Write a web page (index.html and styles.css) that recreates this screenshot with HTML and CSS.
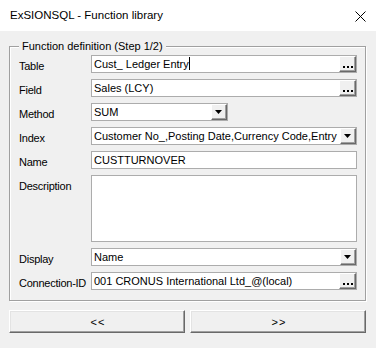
FILE: index.html
```html
<!DOCTYPE html>
<html lang="en">
<head>
  <meta charset="UTF-8">
  <title>ExSIONSQL - Function library</title>
  <link rel="stylesheet" href="styles.css">
</head>
<body>
  <div class="window">
    <div class="titlebar">
      <span class="title">ExSIONSQL - Function library</span>
      <svg class="close" width="11" height="11" viewBox="0 0 11 11">
        <path d="M0.5 0.5 L10.5 10.5 M10.5 0.5 L0.5 10.5" stroke="#000" stroke-width="1"/>
      </svg>
    </div>

    <div class="client">
      <fieldset class="group">
        <legend>Function definition (Step 1/2)</legend>
        <div class="form">
          <label>Table</label>
          <div class="field">
            <span class="value">Cust_ Ledger Entry<span class="caret"></span></span>
            <span class="btn"><svg width="10" height="2" viewBox="0 0 10 2"><rect x="0" width="2" height="2"/><rect x="4" width="2" height="2"/><rect x="8" width="2" height="2"/></svg></span>
          </div>

          <label>Field</label>
          <div class="field">
            <span class="value">Sales (LCY)</span>
            <span class="btn"><svg width="10" height="2" viewBox="0 0 10 2"><rect x="0" width="2" height="2"/><rect x="4" width="2" height="2"/><rect x="8" width="2" height="2"/></svg></span>
          </div>

          <label>Method</label>
          <div class="field combo short">
            <span class="value">SUM</span>
            <span class="btn drop"><svg width="7" height="4" viewBox="0 0 7 4"><polygon points="0,0 7,0 3.5,4"/></svg></span>
          </div>

          <label>Index</label>
          <div class="field combo">
            <span class="value">Customer No_,Posting Date,Currency Code,Entry No_</span>
            <span class="btn drop"><svg width="7" height="4" viewBox="0 0 7 4"><polygon points="0,0 7,0 3.5,4"/></svg></span>
          </div>

          <label>Name</label>
          <div class="field">
            <span class="value">CUSTTURNOVER</span>
          </div>

          <label>Description</label>
          <div class="field tall"></div>

          <label>Display</label>
          <div class="field combo">
            <span class="value">Name</span>
            <span class="btn drop"><svg width="7" height="4" viewBox="0 0 7 4"><polygon points="0,0 7,0 3.5,4"/></svg></span>
          </div>

          <label>Connection-ID</label>
          <div class="field">
            <span class="value">001 CRONUS International Ltd_@(local)</span>
            <span class="btn"><svg width="10" height="2" viewBox="0 0 10 2"><rect x="0" width="2" height="2"/><rect x="4" width="2" height="2"/><rect x="8" width="2" height="2"/></svg></span>
          </div>
        </div>
      </fieldset>

      <div class="nav">
        <button class="push">&lt; &lt;</button>
        <button class="push">&gt; &gt;</button>
      </div>
    </div>
  </div>
</body>
</html>
```

FILE: styles.css
```css
body {
  margin: 0;
  background: #f0f0f0;
  font-family: 'Liberation Sans', Arial, sans-serif;
  color: #000;
}

.window {
  width: 376px;
  height: 348px;
  box-sizing: border-box;
  background: #f0f0f0;
  overflow: hidden;
}

/* Title bar */
.titlebar {
  height: 31px;
  background: #fff;
  display: flex;
  align-items: center;
  justify-content: space-between;
  padding: 0 10px 0 10px;
}
.title {
  font-size: 11.5px;
  padding-bottom: 1px;
}
.close {
  display: block;
  margin-top: 1px;
}

.client {
  padding: 7px 10px 0 9px;
}

/* Group box */
.group {
  margin: 0;
  padding: 1px 8px 10px 9px;
  border: 1px solid #a0a0a0;
  box-shadow: inset 1px 1px 0 #fff, 1px 1px 0 #fff;
  min-width: 0;
}
.group legend {
  padding: 0 3px;
  font-size: 11px;
  line-height: 16px;
  background: #f0f0f0;
}

.form {
  display: grid;
  grid-template-columns: 72px 1fr;
  row-gap: 6px;
  align-items: start;
}
.form label {
  font-size: 11px;
  letter-spacing: -0.25px;
  line-height: 15px;
  height: 18px;
  box-sizing: border-box;
  padding-top: 4px;
  white-space: nowrap;
}

.field {
  height: 18px;
  box-sizing: border-box;
  border: 1px solid #acacac;
  background: #fff;
  display: flex;
  align-items: stretch;
  min-width: 0;
}
.field.short {
  width: 137px;
}
.field.tall {
  height: 67px;
}
.value {
  flex: 1;
  min-width: 0;
  padding-left: 2px;
  font-size: 11px;
  line-height: 16px;
  white-space: nowrap;
  overflow: hidden;
}
.caret {
  display: inline-block;
  width: 1px;
  height: 13px;
  background: #000;
  vertical-align: -2px;
  margin-left: 0;
}

/* Small 3D buttons inside fields */
.btn {
  width: 17px;
  box-sizing: border-box;
  background: #f0f0f0;
  border: 1px solid;
  border-color: #fff #696969 #696969 #fff;
  box-shadow: inset -1px -1px 0 #a0a0a0;
  display: flex;
  align-items: flex-end;
  justify-content: center;
  padding-bottom: 3px;
}
.btn svg {
  display: block;
  fill: #000;
}
.btn.drop {
  width: 16px;
  align-items: center;
  padding: 0 1px 0 0;
}

/* Bottom navigation buttons */
.nav {
  display: grid;
  grid-template-columns: 1fr 1fr;
  column-gap: 5px;
  margin-top: 9px;
}
.push {
  height: 23px;
  margin: 0;
  padding: 0;
  font-family: 'Liberation Sans', Arial, sans-serif;
  font-size: 11px;
  letter-spacing: -1px;
  color: #000;
  background: #f0f0f0;
  border: 1px solid;
  border-color: #fff #696969 #696969 #fff;
  box-shadow: inset -1px -1px 0 #a0a0a0, inset 1px 1px 0 #e3e3e3;
  border-radius: 0;
}
```
